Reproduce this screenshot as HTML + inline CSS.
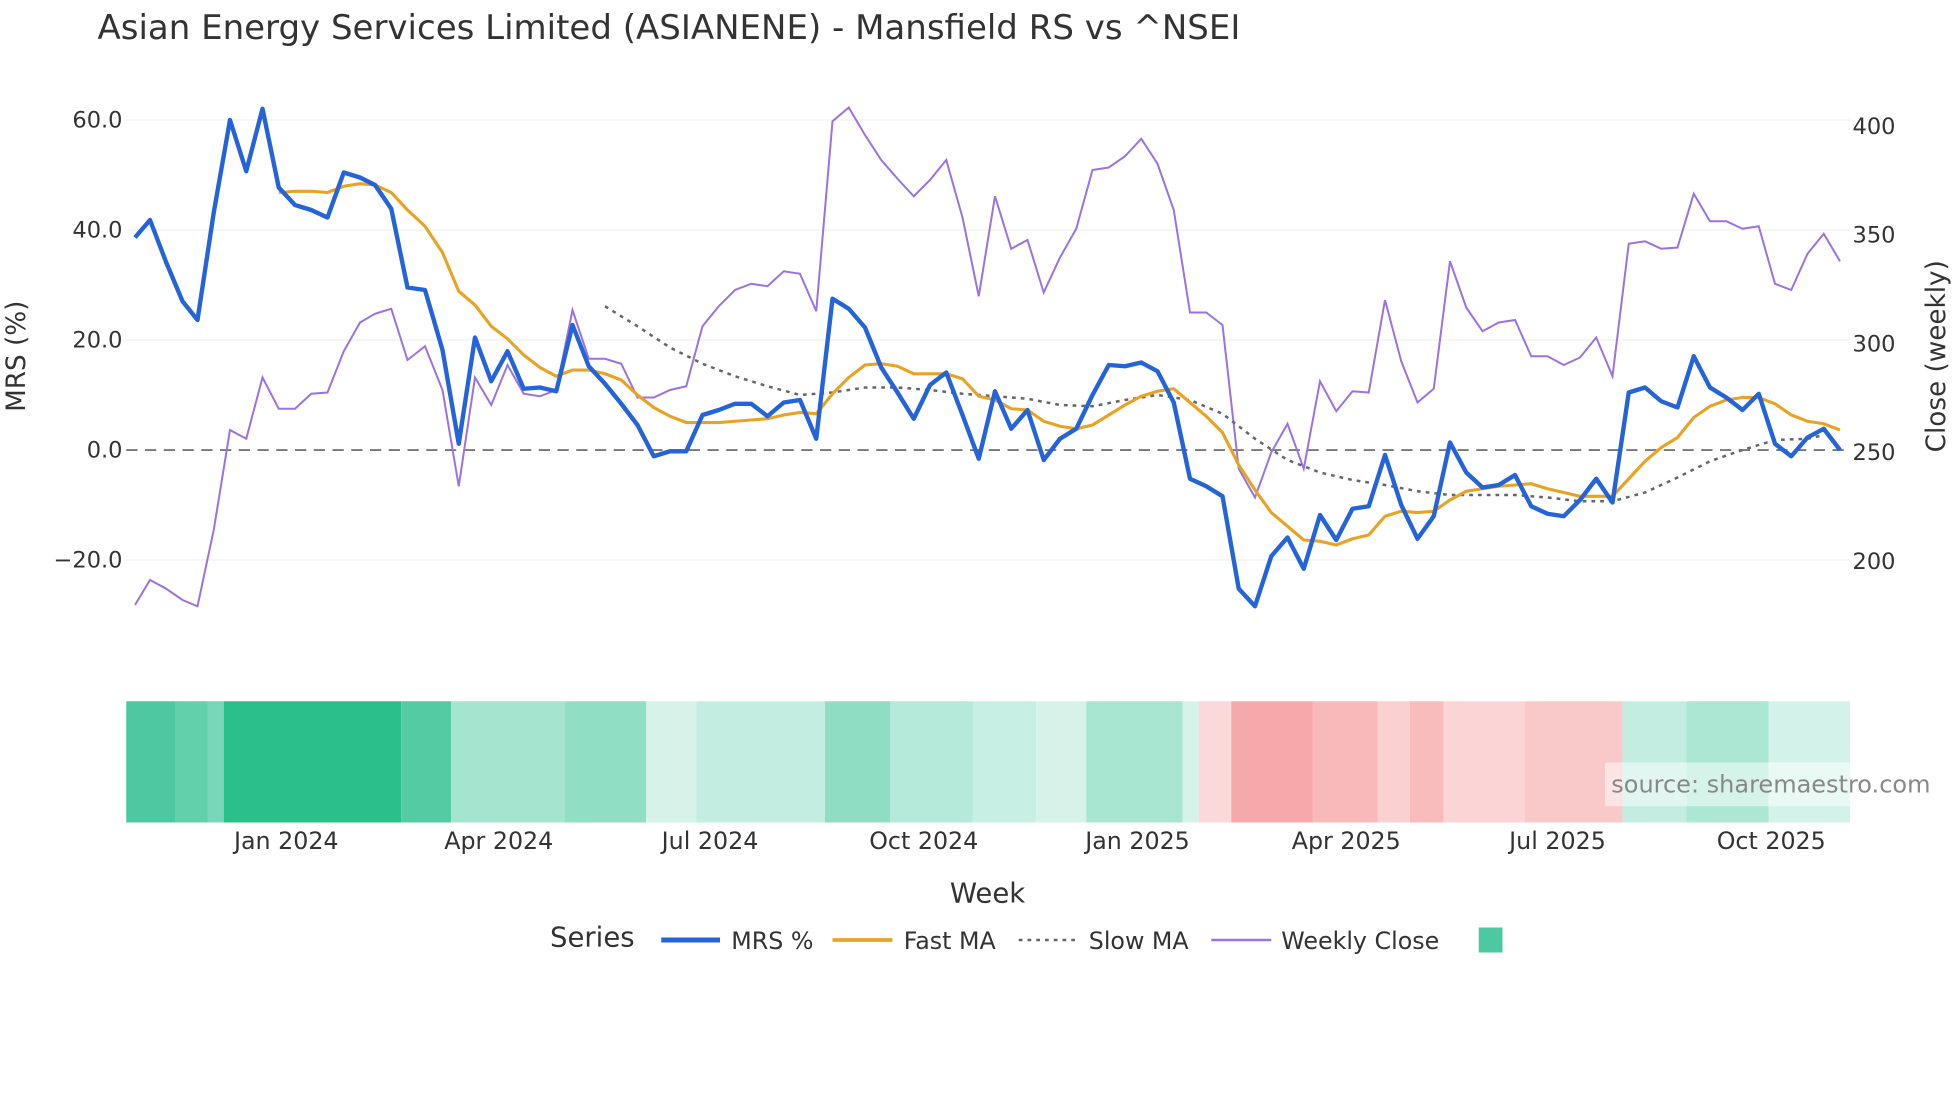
<!DOCTYPE html>
<html><head><meta charset="utf-8"><style>
html,body{margin:0;padding:0;background:#fff;}
svg{display:block;font-family:"DejaVu Sans","Liberation Sans",sans-serif;}
</style></head><body>
<svg width="1960" height="1102" viewBox="0 0 1568 881.6" xmlns="http://www.w3.org/2000/svg">
<rect width="1568" height="881.6" fill="#fff"/>
<text x="78" y="31" font-size="27.2" fill="#333">Asian Energy Services Limited (ASIANENE) - Mansfield RS vs ^NSEI</text>
<g stroke="#eef0f3" stroke-width="1">
<line x1="101" y1="96" x2="1480" y2="96"/><line x1="101" y1="184" x2="1480" y2="184"/><line x1="101" y1="272" x2="1480" y2="272"/><line x1="101" y1="448" x2="1480" y2="448"/>
</g>
<line x1="101" y1="360" x2="1480" y2="360" stroke="#777" stroke-width="1.5" stroke-dasharray="9,6"/>
<g font-size="18" fill="#333" text-anchor="end">
<text x="98" y="102">60.0</text><text x="98" y="190">40.0</text><text x="98" y="278">20.0</text><text x="98" y="366">0.0</text><text x="98" y="454">−20.0</text>
</g>
<g font-size="18" fill="#333">
<text x="1482" y="107">400</text><text x="1482" y="194">350</text><text x="1482" y="281">300</text><text x="1482" y="368">250</text><text x="1482" y="455">200</text>
</g>
<text transform="translate(20,285) rotate(-90)" font-size="21" fill="#333" text-anchor="middle">MRS (%)</text>
<text transform="translate(1556,285) rotate(-90)" font-size="21" fill="#333" text-anchor="middle">Close (weekly)</text>
<polyline fill="none" stroke="#9b72e0" stroke-width="1.6" points="108,484 120,464 133,471 146,480 158,485 171,424 184,344 197,351 210,302 223,327 236,327 249,315 262,314 275,281 288,258 300,251 313,247 326,288 340,277 354,312 367,389 380,302 393,324 406,292 419,315 432,317 445,312 458,248 471,287 484,287 497,291 510,318 523,318 536,312 549,309 562,261 575,245 588,232 601,227 614,229 627,217 640,219 653,249 666,97 679,86 692,108 705,128 718,143 731,157 744,144 757,128 770,174 783,237 796,157 809,199 822,192 835,234 848,206 861,183 874,136 887,134 900,125 913,111 926,131 939,168 952,250 965,250 978,260 991,375 1004,398 1017,362 1030,339 1043,375 1056,305 1069,329 1082,313 1095,314 1108,240 1121,289 1134,322 1147,311 1160,209 1173,246 1186,265 1199,258 1212,256 1225,285 1238,285 1251,292 1264,286 1277,270 1290,301 1303,195 1316,193 1329,199 1342,198 1355,155 1368,177 1381,177 1394,183 1407,181 1420,227 1433,232 1446,203 1459,187 1472,209"/>
<polyline fill="none" stroke="#666" stroke-width="2" stroke-dasharray="3,4" points="484,245 510,261 536,278 562,291 588,301 614,309 640,316 666,314 692,310 718,310 744,312 770,315 796,317 822,319 848,324 874,325 900,320 926,316 952,320 978,331 1004,351 1030,368 1056,378 1082,384 1108,388 1134,393 1160,396 1186,396 1212,396 1238,398 1264,401 1290,401 1316,394 1342,382 1368,369 1394,360 1420,352 1446,351 1459,348"/>
<polyline fill="none" stroke="#e8a324" stroke-width="2.5" points="223,154 236,153 249,153 262,154 275,149 288,147 300,148 313,154 326,168 340,181 354,202 367,233 380,244 393,261 406,271 419,284 432,294 445,301 458,296 471,296 484,299 497,304 510,316 523,326 536,333 549,338 562,338 575,338 588,337 601,336 614,335 627,332 640,330 653,331 666,315 679,302 692,292 705,291 718,293 731,299 744,299 757,299 770,303 783,317 796,320 809,327 822,328 835,337 848,341 861,343 874,340 887,332 900,324 913,317 926,313 939,311 952,322 965,333 978,346 991,372 1004,392 1017,410 1030,421 1043,432 1056,433 1069,436 1082,431 1095,428 1108,413 1121,409 1134,410 1147,409 1160,400 1173,393 1186,391 1199,389 1212,388 1225,387 1238,391 1251,394 1264,397 1277,397 1290,397 1303,383 1316,369 1329,358 1342,350 1355,334 1368,325 1381,320 1394,318 1407,318 1420,323 1433,332 1446,337 1459,339 1472,344"/>
<polyline fill="none" stroke="#2463d8" stroke-width="3.5" stroke-linejoin="round" points="108,190 120,176 133,210 146,241 158,256 171,170 184,96 197,137 210,87 223,150 236,164 249,168 262,174 275,138 288,142 300,148 313,167 326,230 340,232 354,280 367,355 380,270 393,305 406,281 419,311 432,310 445,313 458,260 471,293 484,307 497,323 510,340 523,365 536,361 549,361 562,332 575,328 588,323 601,323 614,333 627,322 640,320 653,351 666,239 679,247 692,262 705,294 718,314 731,335 744,308 757,298 770,332 783,367 796,313 809,343 822,328 835,368 848,351 861,343 874,316 887,292 900,293 913,290 926,297 939,322 952,383 965,389 978,397 991,471 1004,485 1017,445 1030,430 1043,455 1056,412 1069,432 1082,407 1095,405 1108,364 1121,404 1134,431 1147,413 1160,354 1173,378 1186,390 1199,388 1212,380 1225,405 1238,411 1251,413 1264,400 1277,383 1290,402 1303,314 1316,310 1329,321 1342,326 1355,285 1368,310 1381,318 1394,328 1407,315 1420,355 1433,365 1446,350 1459,343 1472,360"/>
<g>
<rect x="101" y="561" width="39" height="97" fill="#4cc9a0"/>
<rect x="140" y="561" width="26" height="97" fill="#62d0ab"/>
<rect x="166" y="561" width="13" height="97" fill="#78d7b8"/>
<rect x="179" y="561" width="142" height="97" fill="#2bbf8c"/>
<rect x="321" y="561" width="40" height="97" fill="#55cba4"/>
<rect x="361" y="561" width="91" height="97" fill="#a5e5d0"/>
<rect x="452" y="561" width="65" height="97" fill="#90dfc4"/>
<rect x="517" y="561" width="40" height="97" fill="#d6f3ea"/>
<rect x="557" y="561" width="103" height="97" fill="#c2ede0"/>
<rect x="660" y="561" width="52" height="97" fill="#8fdec3"/>
<rect x="712" y="561" width="66" height="97" fill="#b5eadb"/>
<rect x="778" y="561" width="51" height="97" fill="#c8efe3"/>
<rect x="829" y="561" width="40" height="97" fill="#d6f3ea"/>
<rect x="869" y="561" width="77" height="97" fill="#a8e6d1"/>
<rect x="946" y="561" width="13" height="97" fill="#d6f3ea"/>
<rect x="959" y="561" width="26" height="97" fill="#fbd9da"/>
<rect x="985" y="561" width="65" height="97" fill="#f7a8aa"/>
<rect x="1050" y="561" width="52" height="97" fill="#f8b9ba"/>
<rect x="1102" y="561" width="26" height="97" fill="#fad0d1"/>
<rect x="1128" y="561" width="27" height="97" fill="#f8bcbd"/>
<rect x="1155" y="561" width="65" height="97" fill="#fbd5d6"/>
<rect x="1220" y="561" width="78" height="97" fill="#f9c8c9"/>
<rect x="1298" y="561" width="51" height="97" fill="#c2ede0"/>
<rect x="1349" y="561" width="66" height="97" fill="#ace7d4"/>
<rect x="1415" y="561" width="65" height="97" fill="#d3f2e9"/>
</g>
<rect x="1284" y="610" width="196" height="35" fill="#fff" fill-opacity="0.5"/>
<text x="1289" y="634" font-size="19.2" fill="#888">source: sharemaestro.com</text>
<g font-size="19" fill="#333" text-anchor="middle">
<text x="229" y="679">Jan 2024</text><text x="399" y="679">Apr 2024</text><text x="568" y="679">Jul 2024</text><text x="739" y="679">Oct 2024</text><text x="910" y="679">Jan 2025</text><text x="1077" y="679">Apr 2025</text><text x="1246" y="679">Jul 2025</text><text x="1417" y="679">Oct 2025</text>
</g>
<text x="790" y="722" font-size="22" fill="#333" text-anchor="middle">Week</text>
<text x="440" y="757" font-size="22" fill="#333">Series</text>
<line x1="529" y1="752" x2="576" y2="752" stroke="#2463d8" stroke-width="4"/>
<text x="585" y="759" font-size="19" fill="#333">MRS %</text>
<line x1="666" y1="752" x2="714" y2="752" stroke="#e8a324" stroke-width="3"/>
<text x="723" y="759" font-size="19" fill="#333">Fast MA</text>
<line x1="815" y1="752" x2="862" y2="752" stroke="#666" stroke-width="2" stroke-dasharray="3,4"/>
<text x="871" y="759" font-size="19" fill="#333">Slow MA</text>
<line x1="969" y1="752" x2="1017" y2="752" stroke="#9b72e0" stroke-width="2"/>
<text x="1025" y="759" font-size="19" fill="#333">Weekly Close</text>
<rect x="1183" y="742" width="19" height="20" fill="#4cc9a0"/>
</svg>
</body></html>
